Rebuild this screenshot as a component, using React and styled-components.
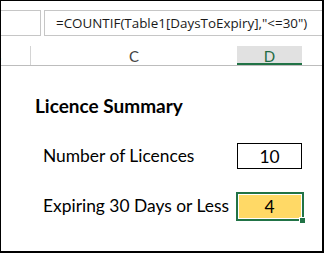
import React from "react";
import styled, { createGlobalStyle } from "styled-components";

const Global = createGlobalStyle`
  html, body { margin: 0; padding: 0; background: #ffffff; }
  #root { width: 324px; height: 253px; }
`;

const Frame = styled.div`
  box-sizing: border-box;
  width: 324px;
  height: 253px;
  border-style: solid;
  border-color: #000;
  border-width: 1px 2px 2px 1px;
  background: #fff;
  overflow: hidden;
  display: flex;
  flex-direction: column;
  position: relative;
`;

const FormulaBar = styled.div`
  display: flex;
  gap: 3px;
  padding-top: 9px;
  height: 26px;
`;

const NameBox = styled.div`
  box-sizing: border-box;
  width: 40px;
  height: 26px;
  border: 1px solid #c6c6c6;
  border-left: none;
  background: #fff;
`;

const FormulaInput = styled.div`
  box-sizing: border-box;
  flex: 1;
  height: 26px;
  border: 1px solid #c6c6c6;
  border-right: none;
  background: #fff;
  padding-left: 11px;
  font-family: "Open Sans", "Noto Sans", sans-serif;
  font-size: 13.4px;
  line-height: 24px;
  color: #1a1a1a;
  white-space: nowrap;
`;

const HeaderRow = styled.div`
  margin-top: 10px;
  height: 19px;
  border-bottom: 1px solid #bdbdbd;
  display: grid;
  grid-template-columns: 29px 1px 206px 65px 1fr;
  font-family: "Lato", "Open Sans", sans-serif;
  font-size: 15px;
`;

const ColHead = styled.div`
  display: flex;
  align-items: center;
  justify-content: center;
  color: ${(p) => (p.$active ? "#1f6b43" : "#444")};
  background: ${(p) => (p.$active ? "#e1e1e1" : "transparent")};
  box-shadow: ${(p) => (p.$active ? "inset 0 -2px 0 #217346" : "none")};
  overflow: hidden;
`;

const ColSep = styled.div`
  background: #d4d4d4;
`;

const CutLetter = styled.span`
  color: #2a8a8a;
  margin-left: -38px;
`;

const Sheet = styled.div`
  display: grid;
  grid-template-columns: 30px 206px 65px 1fr;
  grid-auto-rows: 25px;
  padding-top: 27px;
  font-family: "Lato", "Open Sans", sans-serif;
  color: #000;
`;

const Title = styled.div`
  grid-column: 2 / 4;
  padding-left: 4px;
  font-size: 19px;
  font-weight: 700;
  display: flex;
  align-items: center;
`;

const Spacer = styled.div`
  grid-column: 1 / -1;
`;

const Label = styled.div`
  grid-column: 2;
  padding-left: 12px;
  font-size: 17.4px;
  display: flex;
  align-items: center;
  white-space: nowrap;
`;

const Value = styled.div`
  grid-column: 3;
  box-sizing: border-box;
  width: 65px;
  height: 26px;
  border: 1px solid #000;
  background: ${(p) => (p.$fill ? p.$fill : "#fff")};
  font-size: 17.4px;
  display: flex;
  align-items: center;
  justify-content: center;
  position: relative;
`;

const Selection = styled.div`
  position: absolute;
  top: -2px;
  left: -2px;
  right: -3px;
  bottom: -3px;
  border: 2px solid #217346;
  box-shadow: inset 0 0 0 1px #fff;
  pointer-events: none;
`;

const FillHandle = styled.div`
  position: absolute;
  right: -4px;
  bottom: -5px;
  width: 5px;
  height: 5px;
  background: #217346;
  border: 1px solid #fff;
`;

export default function App() {
  return (
    <>
      <Global />
      <Frame>
        <FormulaBar>
          <NameBox />
          <FormulaInput>=COUNTIF(Table1[DaysToExpiry],"&lt;=30")</FormulaInput>
        </FormulaBar>
        <HeaderRow>
          <ColHead><CutLetter>B</CutLetter></ColHead>
          <ColSep />
          <ColHead>C</ColHead>
          <ColHead $active>D</ColHead>
          <ColHead />
        </HeaderRow>
        <Sheet>
          <Title>Licence Summary</Title>
          <Spacer />
          <Label>Number of Licences</Label>
          <Value>10</Value>
          <Spacer />
          <Label>Expiring 30 Days or Less</Label>
          <Value $fill="#ffd966">
            4
            <Selection>
              <FillHandle />
            </Selection>
          </Value>
        </Sheet>
      </Frame>
    </>
  );
}
